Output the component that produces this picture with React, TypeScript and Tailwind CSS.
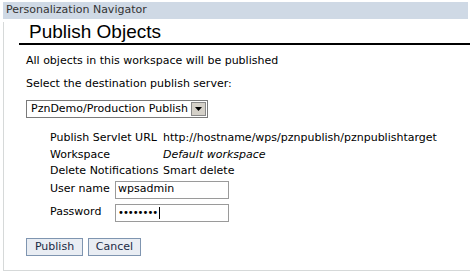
import React from "react";

const rows = [
  { label: "Publish Servlet URL", value: "http://hostname/wps/pznpublish/pznpublishtarget" },
  { label: "Workspace", value: "Default workspace", italic: true },
  { label: "Delete Notifications", value: "Smart delete" },
];

const App = () => {
  return (
    <div className="w-[470px] h-[273px] bg-white pt-[2px] text-[11px] text-black font-['DejaVu_Sans',sans-serif]">
      {/* portlet title */}
      <div className="ml-[3px] mr-[2px] h-[17px] bg-[#cfd9e5] pl-[3px] flex items-center text-[#333]">
        Personalization Navigator
      </div>
      <div className="ml-[3px] border-l border-b border-[#d6d9d9] h-[249px]">
        <div className="mt-[3px] ml-[15px] border-b-2 border-black pl-[10px] h-[23px] flex items-end">
          <span className="text-[19px] leading-[22px] font-['Liberation_Sans',sans-serif]">Publish Objects</span>
        </div>
        <div className="pl-[22px] pt-[10px]">
          <div className="h-[12px] leading-[12px]">All objects in this workspace will be published</div>
          <div className="mt-[11px] h-[12px] leading-[12px]">Select the destination publish server:</div>
          <div className="mt-[10px] w-[182px] h-[18px] border border-[#7a7a7a] flex items-center bg-white">
            <span className="flex-1 pl-[4px]">PznDemo/Production Publish</span>
            <span className="w-[15px] h-[14px] mr-[1px] bg-[#d4d0c8] border border-[#888] flex items-center justify-center">
              <svg width="7" height="4" viewBox="0 0 7 4">
                <path d="M0 0h7L3.5 4z" fill="#000" />
              </svg>
            </span>
          </div>
          <div className="pl-[24px] mt-[12px]">
            {rows.map((r) => (
              <div key={r.label} className="flex h-[16.5px] items-center">
                <span className="w-[113px]">{r.label}</span>
                <span className={r.italic ? "italic" : ""}>{r.value}</span>
              </div>
            ))}
            <div className="flex items-center h-[20px]">
              <span className="w-[65px]">User name</span>
              <div className="w-[114px] h-[18px] border border-[#9a9a9a] flex items-center pl-[2px]">wpsadmin</div>
            </div>
            <div className="flex items-center mt-[3px] h-[20px]">
              <span className="w-[65px]">Password</span>
              <div className="w-[114px] h-[18px] border border-[#9a9a9a] flex items-center pl-[2px] text-[10px] tracking-[-1px]">
                ••••••••<span className="ml-[2px] w-px h-[12px] bg-black" />
              </div>
            </div>
          </div>
          <div className="flex gap-[5px] mt-[15px]">
            <button className="w-[57px] h-[18px] bg-[#e9edf3] border border-[#7f95b0] text-[#1a2a44]">Publish</button>
            <button className="w-[53px] h-[18px] bg-[#e9edf3] border border-[#7f95b0] text-[#1a2a44]">Cancel</button>
          </div>
        </div>
      </div>
    </div>
  );
};

export default App;
